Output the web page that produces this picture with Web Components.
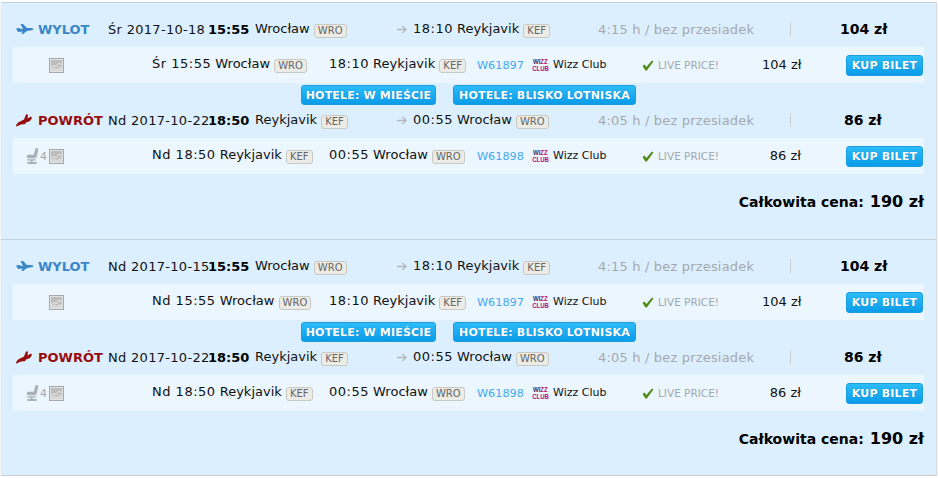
<!DOCTYPE html>
<html lang="pl">
<head>
<meta charset="utf-8">
<title>Loty</title>
<style>
  html, body { margin: 0; padding: 0; background: #fff; }
  body { font: 13px "DejaVu Sans", Verdana, sans-serif; color: #111; padding-top: 2px; width: 938px; }
</style>
</head>
<body>
<flight-list></flight-list>

<script>
const ICONS = {
  out: `<svg width="18" height="10" viewBox="0 0 18 10"><path fill="#3a86c8" d="M0 4.5 3 4 5.5 5 7 5 4.5 0 7 0 11 4 15 4C17 4 17.8 5.2 17 6L11 7 7 10 5.5 10 6.5 7.5 2 8Z"/></svg>`,
  back: `<svg width="16" height="13" viewBox="0 0 16 13"><path fill="#970d0d" d="M0 12.5C0 10 2 8.5 4 7.5L8 5.5 10 .5 12 .5 11.5 4.5 15 2.5 16 4 14 7 9 9 10 10 5 10.5C3 11 1.5 12.5 0 12.5Z"/></svg>`,
  seat: `<svg width="13" height="17" viewBox="0 0 13 17"><path fill="#a9b0b8" d="M9.6 0 12.4.6 10.8 8.8 9 10.2 2.6 10.2C1 10.2.6 9 1 7.2L2 6.8 7.8 6.8ZM1 11.2 10 11.2 10 12.4 6.6 12.4 6.6 14 10.6 14 10.6 16 1.4 16 1.4 14 4.6 14 4.6 12.4 1 12.4Z"/></svg>`,
  photo: `<svg width="15" height="15" viewBox="0 0 15 15"><rect x=".5" y=".5" width="14" height="14" fill="#e2e3e4" stroke="#a8a8a8"/><rect x="2" y="2" width="11" height="11" fill="#bcbcbc"/><path fill="none" stroke="#eee" d="M2 10 5 7 7 9 10 5 13 7"/><path fill="#d8d8d8" d="M2 11 5 9 8 11 11 8 13 10 13 13 2 13Z"/></svg>`,
  check: `<svg width="12" height="11" viewBox="0 0 12 11"><path fill="#4f8a10" d="M.6 6 2.4 4.6 4.4 7 10 .6 11.4 1.4 4.8 10.6 3.4 10.6Z"/></svg>`,
  arrow: `<svg width="10" height="9" viewBox="0 0 10 9"><path fill="none" stroke="#b4b8bc" stroke-width="1.4" d="M0 4.5H8.6M5.4 1 9 4.5 5.4 8"/></svg>`,
};

class AirportTag extends HTMLElement {
  constructor() {
    super();
    this.attachShadow({mode: "open"}).innerHTML = `
      <style>
        :host {
          display: inline-block;
          box-sizing: border-box;
          height: 14px;
          line-height: 12px;
          padding: 0 3px;
          font-size: 10px;
          letter-spacing: 0;
          color: #666;
          background: #ecebe6;
          border: 1px solid #c9c9c4;
          border-radius: 3px;
          vertical-align: -1px;
        }
      </style>
      <slot></slot>`;
  }
}
customElements.define("airport-tag", AirportTag);

class BlueButton extends HTMLElement {
  constructor() {
    super();
    this.attachShadow({mode: "open"}).innerHTML = `
      <style>
        :host {
          display: inline-flex;
          align-items: center;
          justify-content: center;
          box-sizing: border-box;
          height: 20px;
          font-size: 11px;
          font-weight: bold;
          letter-spacing: .18px;
          color: #fff;
          white-space: nowrap;
          background: linear-gradient(#2dbcf8, #0a9ce9);
          border: 1px solid #1a9ee0;
          border-radius: 3px;
          text-shadow: 0 0 1px rgba(0,80,140,.5);
        }
      </style>
      <slot></slot>`;
  }
}
customElements.define("blue-button", BlueButton);

class LegHeader extends HTMLElement {
  connectedCallback() {
    const a = (n) => this.getAttribute(n);
    const back = a("dir") === "back";
    this.attachShadow({mode: "open"}).innerHTML = `
      <style>
        :host {
          display: grid;
          grid-template-columns: 22px 70px 100px 47px 142px 201px 192px 50px auto;
          align-items: center;
          height: 18px;
          padding-left: 3px;
          white-space: nowrap;
        }
        .icon { display: flex; align-items: center; }
        .label { font-weight: bold; color: ${back ? "#970d0d" : "#3a86c8"}; }
        .arr { display: flex; align-items: center; gap: 6px; }
        .dur { color: #a5a8ac; letter-spacing: .18px; }
        .sep { border-left: 1px solid #c8d0d6; height: 14px; }
        .price { font-size: 14px; font-weight: bold; color: #000; }
        .arrow { display: flex; }
        .date { letter-spacing: .3px; }
        .t { letter-spacing: .5px; }
        b { font-weight: bold; color: #000; }
      </style>
      <span class="icon">${back ? ICONS.back : ICONS.out}</span>
      <span class="label">${a("label")}</span>
      <span class="date">${a("date")}</span>
      <b>${a("time")}</b>
      <span>${a("from")} <airport-tag>${a("fromcode")}</airport-tag></span>
      <span class="arr"><span class="arrow">${ICONS.arrow}</span><span><span class="t">${a("arrtime")}</span> ${a("to")} <airport-tag>${a("tocode")}</airport-tag></span></span>
      <span class="dur">${a("dur")}</span>
      <span class="sep"></span>
      <span class="price" style="margin-left:${back ? 4 : 0}px">${a("price")}</span>`;
  }
}
customElements.define("leg-header", LegHeader);

class LegRow extends HTMLElement {
  connectedCallback() {
    const a = (n) => this.getAttribute(n);
    const seats = a("seats");
    this.attachShadow({mode: "open"}).innerHTML = `
      <style>
        :host {
          display: grid;
          grid-template-columns: 139px 177px 148px 55px 110px 120px 84px auto;
          align-items: center;
          height: 36px;
          background: #ebf6ff;
          white-space: nowrap;
        }
        .extras { display: flex; align-items: center; height: 17px; padding-left: 13px; }
        .seat { display: flex; width: 14px; }
        .count { width: 9px; font-size: 11px; color: #a5a8ac; }
        .photo { display: flex; margin-left: ${seats ? 0 : 23}px; }
        .txt { padding-bottom: 2px; }
        .flight { color: #45a9f0; font-size: 11.25px; }
        .airline { font-size: 11px; padding-bottom: 1px; }
        .carrier { display: flex; gap: 4px; align-items: center; }
        .live { display: flex; align-items: center; gap: 4px; font-size: 10.5px; color: #a5a8ac; }
        .price { text-align: right; padding-right: 45px; }
        .buy { width: 77px; height: 21px; }
        .t { letter-spacing: .5px; }
      </style>
      <span class="extras">
        ${seats ? `<span class="seat">${ICONS.seat}</span><span class="count">${seats}</span>` : ""}
        <span class="photo">${ICONS.photo}</span>
      </span>
      <span class="txt"><span class="t">${a("dep")}</span> ${a("from")} <airport-tag>${a("fromcode")}</airport-tag></span>
      <span class="txt"><span class="t">${a("arr")}</span> ${a("to")} <airport-tag>${a("tocode")}</airport-tag></span>
      <span class="flight">${a("flight")}</span>
      <span class="carrier">
        <svg width="17" height="18" viewBox="0 0 17 18" font-family="Liberation Sans, sans-serif" font-weight="bold" font-size="6">
          <g transform="scale(1 1.25)">
            <text x="1" y="6.4" fill="#3b2a6b">WI<tspan fill="#b3107a">ZZ</tspan></text>
            <text x=".3" y="12" fill="#b3107a">CLUB</text>
          </g>
        </svg>
        <span class="airline">Wizz Club</span>
      </span>
      <span class="live">${ICONS.check}<span>LIVE PRICE!</span></span>
      <span class="price txt">${a("price")}</span>
      <blue-button class="buy">KUP BILET</blue-button>`;
  }
}
customElements.define("leg-row", LegRow);

class HotelLinks extends HTMLElement {
  constructor() {
    super();
    this.attachShadow({mode: "open"}).innerHTML = `
      <style>
        :host { display: flex; justify-content: flex-start; gap: 17px; padding: 2px 0 0 288px; height: 20px; }
      </style>
      <blue-button style="width:135px">HOTELE: W MIEŚCIE</blue-button>
      <blue-button style="width:183px">HOTELE: BLISKO LOTNISKA</blue-button>`;
  }
}
customElements.define("hotel-links", HotelLinks);

class FlightCard extends HTMLElement {
  constructor() {
    super();
    this.attachShadow({mode: "open"}).innerHTML = `
      <style>
        :host {
          display: block;
          box-sizing: border-box;
          height: 237px;
          background: #dcefff;
          padding: 17px 12px 0 12px;
          border-bottom: 1px solid #c8cfd4;
        }
        :host(:last-child) { height: 236px; }
        .slots { display: flex; flex-direction: column; }
        .total { margin-top: 18px; display: flex; justify-content: flex-end; align-items: baseline; gap: 6px; font-size: 14px; font-weight: bold; color: #000; }
        .total span { font-size: 16px; }
      </style>
      <div class="slots"><slot></slot></div>
      <div class="total">Całkowita cena: <span>${this.getAttribute("total")}</span></div>`;
  }
}
customElements.define("flight-card", FlightCard);

class FlightList extends HTMLElement {
  connectedCallback() {
    const route = (out) => `
      <flight-card total="190 zł">
        <leg-header label="WYLOT" date="${out.date}" time="15:55" from="Wrocław" fromcode="WRO" arrtime="18:10" to="Reykjavik" tocode="KEF" dur="4:15 h / bez przesiadek" price="104 zł"></leg-header>
        <leg-row style="margin-top:9px" dep="${out.day} 15:55" from="Wrocław" fromcode="WRO" arr="18:10" to="Reykjavik" tocode="KEF" flight="W61897" price="104 zł"></leg-row>
        <hotel-links></hotel-links>
        <leg-header style="margin-top:6px" dir="back" label="POWRÓT" date="Nd 2017-10-22" time="18:50" from="Reykjavik" fromcode="KEF" arrtime="00:55" to="Wrocław" tocode="WRO" dur="4:05 h / bez przesiadek" price="86 zł"></leg-header>
        <leg-row style="margin-top:9px" seats="4" dep="Nd 18:50" from="Reykjavik" fromcode="KEF" arr="00:55" to="Wrocław" tocode="WRO" flight="W61898" price="86 zł"></leg-row>
      </flight-card>`;
    this.attachShadow({mode: "open"}).innerHTML = `
      <style>
        :host {
          display: block;
          box-sizing: border-box;
          width: 936px;
          margin-left: 1px;
          border-top: 1px solid #c8cfd4;
          border-right: 1px solid #d5dce2;
          box-shadow: 0 1px 2px rgba(0,0,0,.12);
        }
      </style>
      ${route({date: "Śr 2017-10-18", day: "Śr"})}
      ${route({date: "Nd 2017-10-15", day: "Nd"})}`;
  }
}
customElements.define("flight-list", FlightList);
</script>
</body>
</html>
